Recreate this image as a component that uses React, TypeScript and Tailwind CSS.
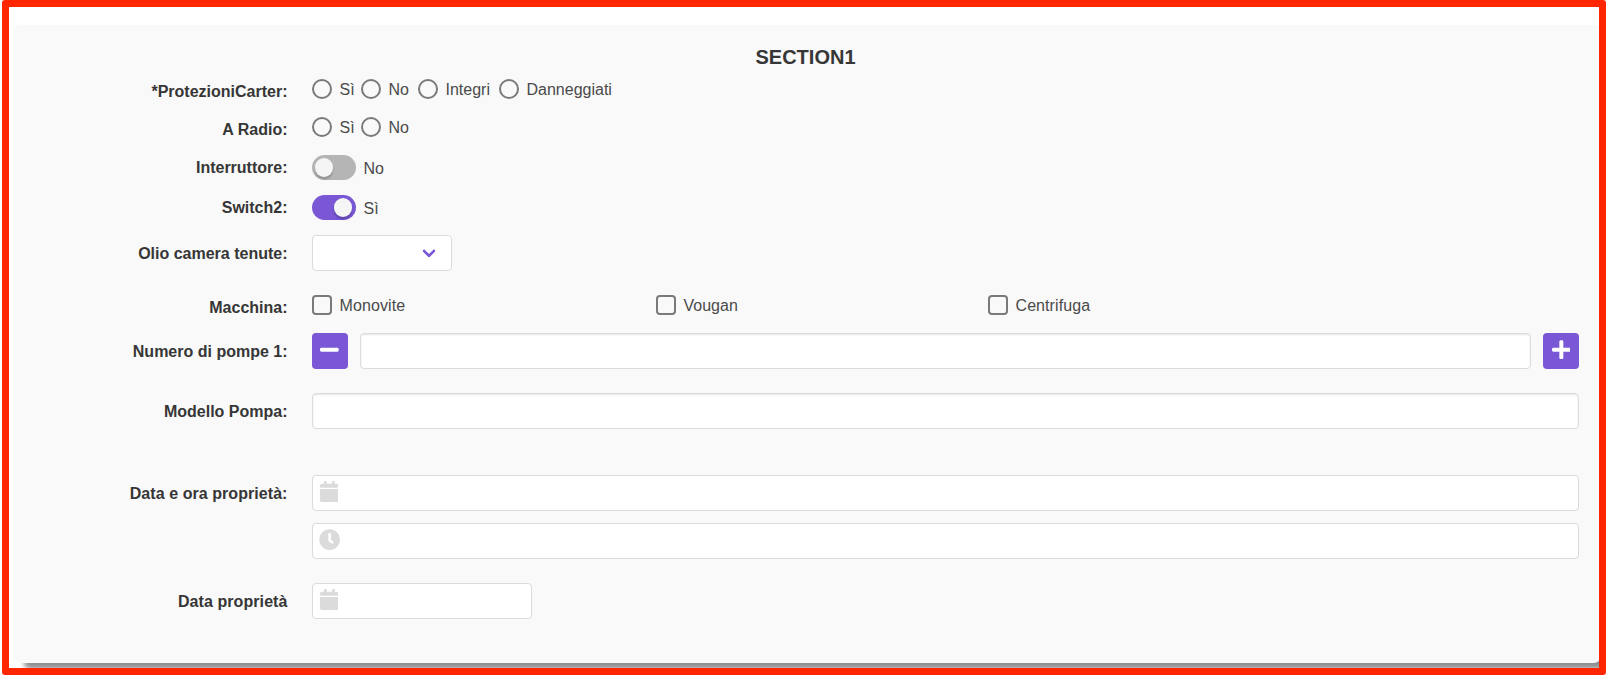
import type { ReactNode } from "react";
import { FaCalendar, FaClock, FaMinus, FaPlus } from "react-icons/fa";

function Row({ label, className, labelClass = "pt-px", children }: { label: string; className: string; labelClass?: string; children: ReactNode }) {
  return (
    <div className={`flex items-start ${className}`}>
      <div className={`mr-6 w-[255.5px] shrink-0 text-right font-bold text-[#363636] ${labelClass}`}>{label}</div>
      <div className="min-w-0 flex-1">{children}</div>
    </div>
  );
}

function Radio({ text, className = "" }: { text: string; className?: string }) {
  return (
    <label className={`flex h-5 shrink-0 items-center gap-2 ${className}`}>
      <span className="size-5 shrink-0 rounded-full border-2 border-[#7a7a7a]" />
      <span className="pt-px">{text}</span>
    </label>
  );
}

function Check({ text, className = "" }: { text: string; className?: string }) {
  return (
    <label className={`flex h-5 shrink-0 items-center gap-2 ${className}`}>
      <span className="size-5 shrink-0 rounded-sm border-2 border-[#7a7a7a]" />
      <span className="pt-px">{text}</span>
    </label>
  );
}

function Toggle({ on = false, text }: { on?: boolean; text: string }) {
  return (
    <label className="flex h-[25px] items-center gap-2">
      <span className={`flex h-[25.2px] w-11 items-center rounded-2xl p-[3.2px] ${on ? "justify-end bg-[#7957d5]" : "justify-start bg-[#b5b5b5]"}`}>
        <span className="size-[18.8px] rounded-full bg-[#f5f5f5] shadow-[0_3px_1px_0_rgba(0,0,0,0.05),0_2px_2px_0_rgba(0,0,0,0.1),0_3px_3px_0_rgba(0,0,0,0.05)]" />
      </span>
      <span className="pt-0.5">{text}</span>
    </label>
  );
}

function Field({ className = "", children }: { className?: string; children?: ReactNode }) {
  return <div className={`flex h-9 rounded border border-[#dbdbdb] bg-white ${className}`}>{children}</div>;
}

const inset = "shadow-[inset_0_1px_2px_rgba(10,10,10,0.1)]";

export default function App() {
  return (
    <div className="h-[675px] bg-white pr-px pl-0.5 font-['Liberation_Sans',Arial,sans-serif] text-base leading-6 text-[#4a4a4a]">
      <div className="h-[675px] overflow-hidden rounded-[3px] border-7 border-[#ff2600] pt-[18px] pl-[5px]">
        <div className="h-[638px] w-[1586px] rounded-md bg-[#f9f9f9] pr-[21px] pl-[18px] shadow-[10px_6px_5px_#908f94]">
          <h1 className="h-[54px] pt-[18px] text-center text-xl leading-7 font-bold text-[#363636]">SECTION1</h1>
          <Row label="*ProtezioniCarter:" className="h-[38px]">
            <div className="flex">
              <Radio text="Sì" className="w-[49px]" />
              <Radio text="No" className="w-[57px]" />
              <Radio text="Integri" className="w-[81px]" />
              <Radio text="Danneggiati" />
            </div>
          </Row>
          <Row label="A Radio:" className="h-[38px]">
            <div className="flex">
              <Radio text="Sì" className="w-[49px]" />
              <Radio text="No" />
            </div>
          </Row>
          <Row label="Interruttore:" className="h-10">
            <Toggle text="No" />
          </Row>
          <Row label="Switch2:" className="h-10">
            <Toggle on text="Sì" />
          </Row>
          <Row label="Olio camera tenute:" className="h-[60px]" labelClass="pt-[7px]">
            <Field className="relative w-[140px]">
              <span className="absolute top-[10px] right-[17px] size-2.5 -rotate-45 rounded-[2px] border-b-3 border-l-3 border-[#7957d5]" />
            </Field>
          </Row>
          <Row label="Macchina:" className="h-[38px]">
            <div className="flex">
              <Check text="Monovite" className="w-[344px] tracking-[0.1px]" />
              <Check text="Vougan" className="w-[332px]" />
              <Check text="Centrifuga" className="tracking-[0.08px]" />
            </div>
          </Row>
          <Row label="Numero di pompe 1:" className="h-[60px]" labelClass="pt-[7px]">
            <div className="flex gap-3">
              <button className="flex size-9 items-center justify-center rounded bg-[#7957d5] pb-0.5 text-white">
                <FaMinus className="h-[21.3px] w-[18.7px]" />
              </button>
              <Field className={`flex-1 ${inset}`} />
              <button className="flex size-9 items-center justify-center rounded bg-[#7957d5] pb-0.5 text-white">
                <FaPlus className="h-[21.3px] w-[18.7px]" />
              </button>
            </div>
          </Row>
          <Row label="Modello Pompa:" className="h-[82px]" labelClass="pt-[7px]">
            <Field className={inset} />
          </Row>
          <Row label="Data e ora proprietà:" className="h-[108px]" labelClass="pt-[7px] tracking-[0.06px]">
            <div className="flex flex-col gap-3">
              <Field className="pt-[5px] pl-[7px] text-[#dbdbdb]">
                <FaCalendar className="h-[21.3px] w-[18.7px]" />
              </Field>
              <Field className="pt-[5px] pl-1.5 text-[#dbdbdb]">
                <FaClock className="size-[21.3px]" />
              </Field>
            </div>
          </Row>
          <Row label="Data proprietà" className="h-9" labelClass="pt-[7px] tracking-[0.08px]">
            <Field className="w-[220px] pt-[5px] pl-[7px] text-[#dbdbdb]">
              <FaCalendar className="h-[21.3px] w-[18.7px]" />
            </Field>
          </Row>
        </div>
      </div>
    </div>
  );
}
